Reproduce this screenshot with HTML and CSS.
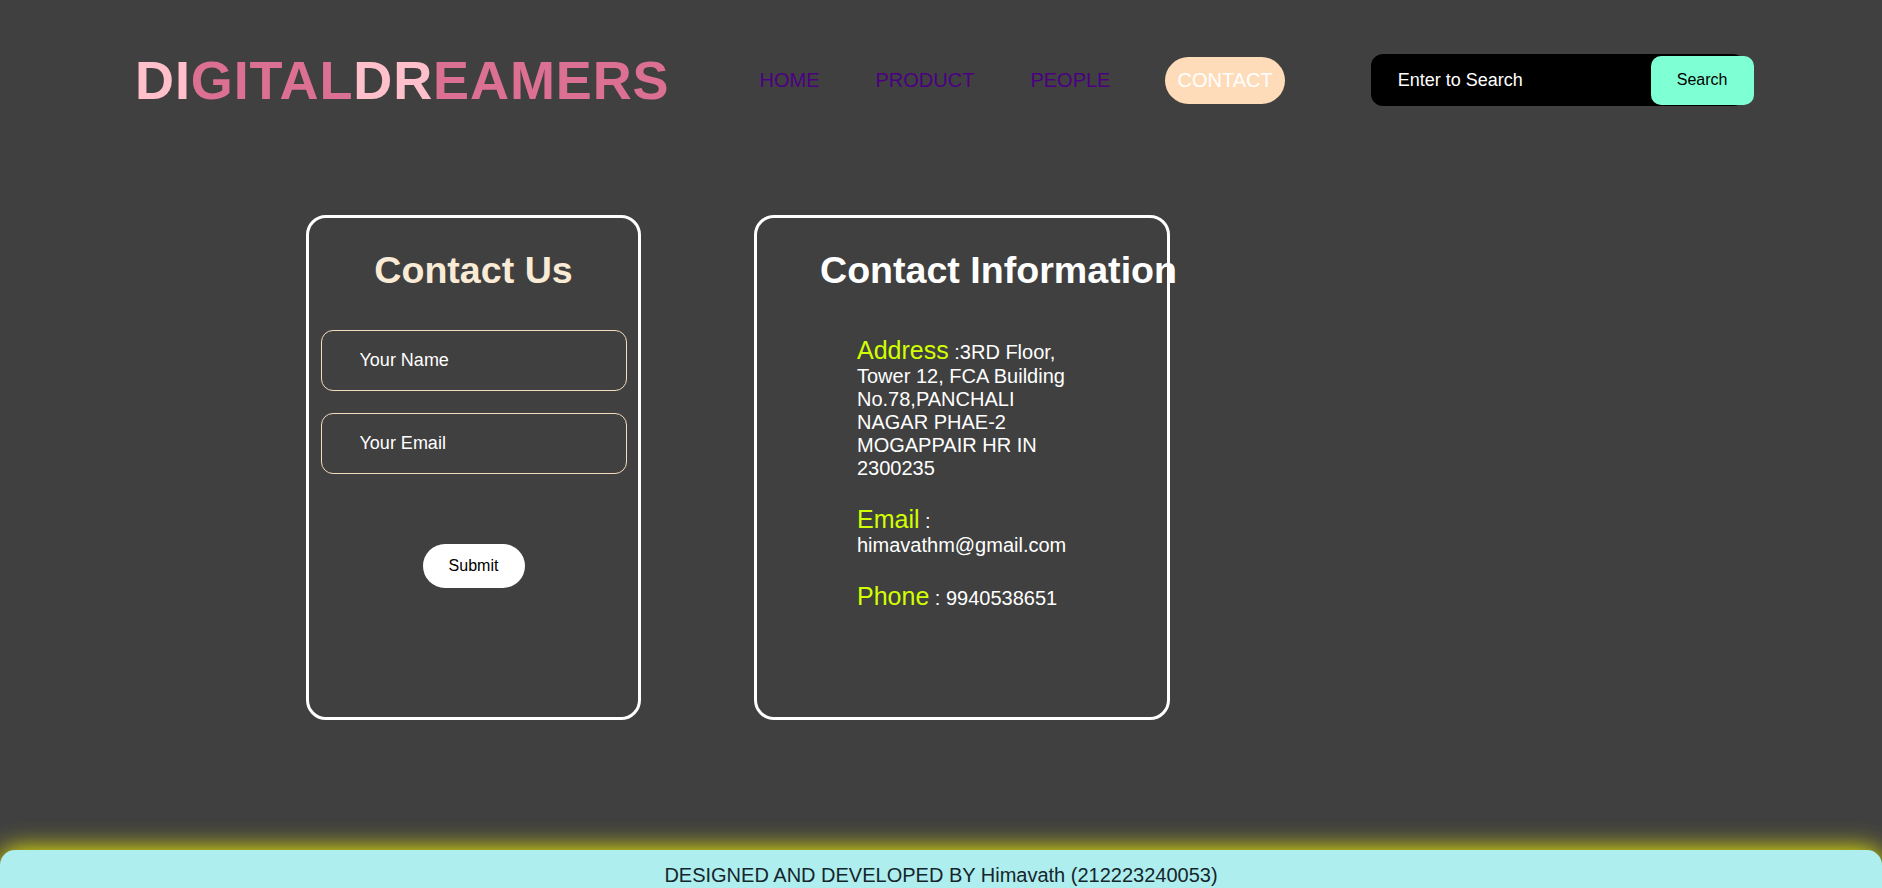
FILE: index.html
```html
<!DOCTYPE html>
<html lang="en">
<head>
<meta charset="utf-8">
<title>Digital Dreamers - Contact</title>
<link rel="stylesheet" href="styles.css">
</head>
<body>
<header class="topbar">
  <h1 class="logo"><span class="lt">DI</span><span class="dk">GITAL</span><span class="lt">DR</span><span class="dk">EAMERS</span></h1>
  <nav class="nav">
    <a href="#" class="nav-link">HOME</a>
    <a href="#" class="nav-link">PRODUCT</a>
    <a href="#" class="nav-link">PEOPLE</a>
    <a href="#" class="nav-link active">CONTACT</a>
  </nav>
  <form class="search">
    <input class="search-input" type="text" placeholder="Enter to Search">
    <button class="search-btn" type="button">Search</button>
  </form>
</header>

<main class="content">
  <section class="card form-card">
    <h2 class="card-title cream">Contact Us</h2>
    <input class="field first" type="text" placeholder="Your Name">
    <input class="field" type="email" placeholder="Your Email">
    <button class="submit" type="button">Submit</button>
  </section>

  <section class="card info-card">
    <h2 class="card-title">Contact Information</h2>
    <div class="details">
      <p><span class="label">Address</span> :3RD Floor, Tower 12, FCA Building No.78,PANCHALI NAGAR PHAE-2 MOGAPPAIR HR IN 2300235</p>
      <p><span class="label">Email</span> : himavathm@gmail.com</p>
      <p><span class="label">Phone</span> : 9940538651</p>
    </div>
  </section>
</main>

<footer class="footer">DESIGNED AND DEVELOPED BY Himavath (212223240053)</footer>
</body>
</html>
```

FILE: styles.css
```css
* { box-sizing: border-box; }

html, body {
  margin: 0;
  padding: 0;
}

body {
  background: #404040;
  font-family: "Liberation Sans", Arial, sans-serif;
  color: #fff;
}

/* Header */
.topbar {
  display: flex;
  align-items: center;
  height: 160px;
  padding-left: 135px;
}

.logo {
  margin: 0;
  font-size: 54px;
  letter-spacing: 0.9px;
  font-weight: bold;
  line-height: normal;
}
.logo .lt { color: #ffc0cb; }
.logo .dk { color: #db7093; }

.nav {
  display: flex;
  align-items: center;
  gap: 32px;
  margin-left: 78px;
}

.nav-link {
  font-size: 20px;
  line-height: 23px;
  padding: 12px;
  color: #4b0082;
  text-decoration: none;
}

.nav-link.active {
  margin-left: 11px;
  background: #ffdcb9;
  color: #fff;
  border-radius: 24px;
}

.search {
  display: flex;
  align-items: center;
  margin: 0 0 0 86px;
}

.search-input {
  width: 374px;
  height: 52px;
  border: none;
  border-radius: 12px;
  background: #000;
  color: #fff;
  padding: 0 0 0 27px;
  font-family: inherit;
  font-size: 18px;
  outline: none;
}
.search-input::placeholder { color: #fff; opacity: 1; }

.search-btn {
  width: 103px;
  height: 49px;
  margin-left: -94px;
  border: none;
  border-radius: 10px;
  background: #7fffd4;
  color: #000;
  font-family: inherit;
  font-size: 16px;
}

/* Cards */
.content {
  display: flex;
  gap: 113px;
  padding-left: 306px;
  margin-top: 55px;
}

.card {
  height: 505px;
  border: 3px solid #fff;
  border-radius: 20px;
}

.card-title {
  margin: 31px 0 0;
  font-size: 37.6px;
  font-weight: bold;
  line-height: normal;
  white-space: nowrap;
  color: #fff;
}
.card-title.cream { color: #faebd7; }

.form-card {
  width: 335px;
  display: flex;
  flex-direction: column;
  align-items: center;
}

.field {
  width: 306px;
  height: 61px;
  margin-top: 22px;
  border: 1px solid #f3dcbc;
  border-radius: 12px;
  background: transparent;
  padding: 0 0 0 38px;
  font-family: inherit;
  font-size: 18px;
  color: #fff;
  outline: none;
}
.field.first { margin-top: 38px; }
.field::placeholder { color: #fff; opacity: 1; }

.submit {
  margin-top: 70px;
  width: 102px;
  height: 44px;
  border: none;
  border-radius: 22px;
  background: #fff;
  color: #000;
  font-family: inherit;
  font-size: 16px;
}

.info-card {
  width: 416px;
  padding-left: 63px;
}

.details {
  width: 222px;
  margin: 44px 0 0 37px;
}

.details p {
  margin: 0 0 25px;
  font-size: 20px;
  line-height: normal;
  color: #fff;
}

.label {
  font-size: 25px;
  color: #d2ff00;
}

/* Footer */
.footer {
  margin-top: 130px;
  padding: 14px 0;
  background: #afeeee;
  color: #14262c;
  text-align: center;
  font-size: 20px;
  line-height: 23px;
  border-radius: 15px 15px 0 0;
  box-shadow: 0 0 26px #ffff00;
}
```
